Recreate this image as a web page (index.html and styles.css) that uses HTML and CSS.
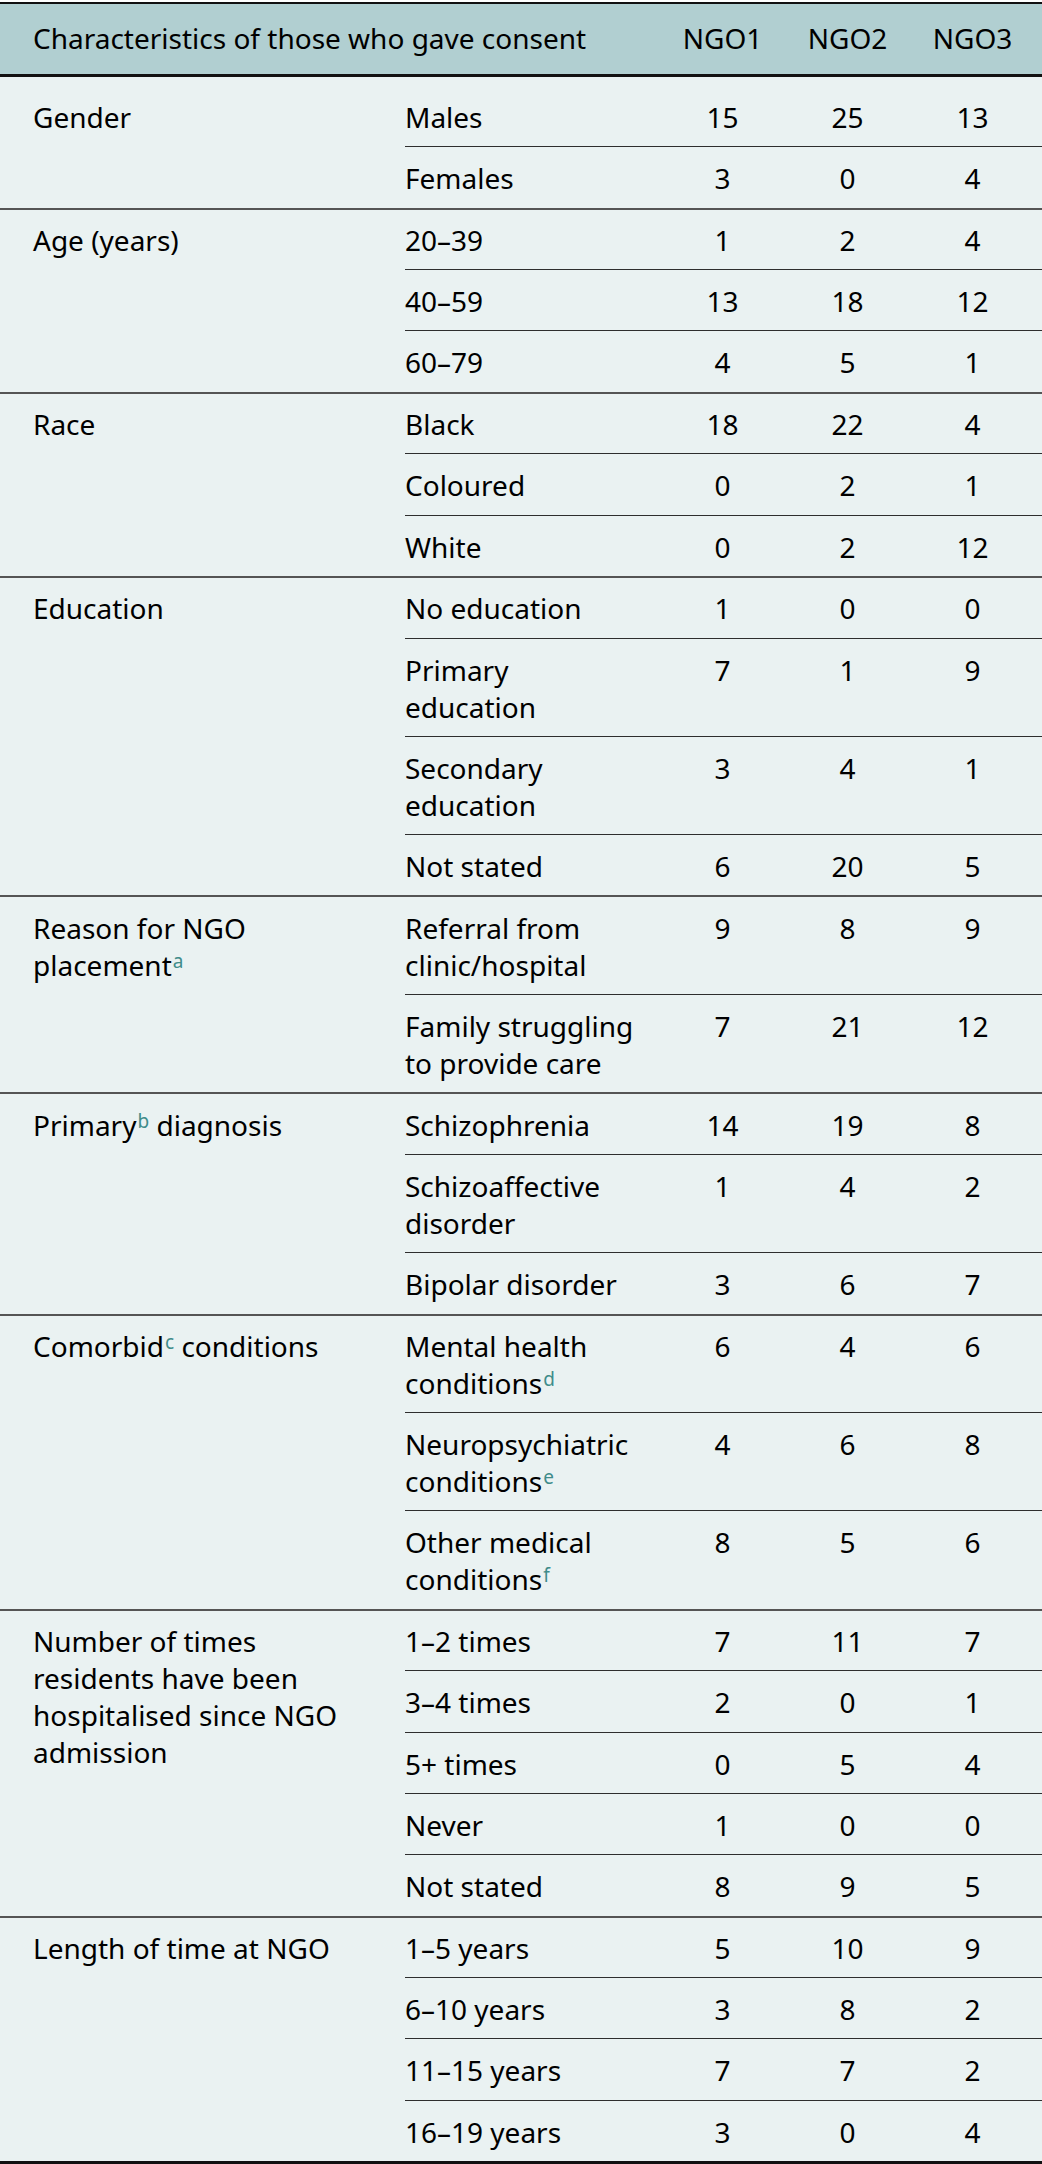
FILE: index.html
```html
<!DOCTYPE html>
<html lang="en">
<head>
<meta charset="utf-8">
<title>Characteristics of those who gave consent</title>
<link rel="stylesheet" href="styles.css">
</head>
<body>
<table class="chars">
  <colgroup>
    <col class="c-cat">
    <col class="c-sub">
    <col class="c-num">
    <col class="c-num">
    <col class="c-last">
  </colgroup>
  <thead>
    <tr>
      <th colspan="2" class="h-label">Characteristics of those who gave consent</th>
      <th class="num">NGO1</th>
      <th class="num">NGO2</th>
      <th class="num last">NGO3</th>
    </tr>
  </thead>
  <tbody>
    <tr class="group first">
      <td rowspan="2" class="cat">Gender</td>
      <td class="sub">Males</td><td class="num">15</td><td class="num">25</td><td class="num last">13</td>
    </tr>
    <tr><td class="sub">Females</td><td class="num">3</td><td class="num">0</td><td class="num last">4</td></tr>

    <tr class="group">
      <td rowspan="3" class="cat">Age (years)</td>
      <td class="sub">20–39</td><td class="num">1</td><td class="num">2</td><td class="num last">4</td>
    </tr>
    <tr><td class="sub">40–59</td><td class="num">13</td><td class="num">18</td><td class="num last">12</td></tr>
    <tr><td class="sub">60–79</td><td class="num">4</td><td class="num">5</td><td class="num last">1</td></tr>

    <tr class="group">
      <td rowspan="3" class="cat">Race</td>
      <td class="sub">Black</td><td class="num">18</td><td class="num">22</td><td class="num last">4</td>
    </tr>
    <tr><td class="sub">Coloured</td><td class="num">0</td><td class="num">2</td><td class="num last">1</td></tr>
    <tr><td class="sub">White</td><td class="num">0</td><td class="num">2</td><td class="num last">12</td></tr>

    <tr class="group">
      <td rowspan="4" class="cat">Education</td>
      <td class="sub">No education</td><td class="num">1</td><td class="num">0</td><td class="num last">0</td>
    </tr>
    <tr><td class="sub">Primary education</td><td class="num">7</td><td class="num">1</td><td class="num last">9</td></tr>
    <tr><td class="sub">Secondary education</td><td class="num">3</td><td class="num">4</td><td class="num last">1</td></tr>
    <tr><td class="sub">Not stated</td><td class="num">6</td><td class="num">20</td><td class="num last">5</td></tr>

    <tr class="group">
      <td rowspan="2" class="cat">Reason for NGO placement<sup class="fn">a</sup></td>
      <td class="sub">Referral from clinic/hospital</td><td class="num">9</td><td class="num">8</td><td class="num last">9</td>
    </tr>
    <tr><td class="sub">Family struggling to provide care</td><td class="num">7</td><td class="num">21</td><td class="num last">12</td></tr>

    <tr class="group">
      <td rowspan="3" class="cat">Primary<sup class="fn">b</sup> diagnosis</td>
      <td class="sub">Schizophrenia</td><td class="num">14</td><td class="num">19</td><td class="num last">8</td>
    </tr>
    <tr><td class="sub">Schizoaffective disorder</td><td class="num">1</td><td class="num">4</td><td class="num last">2</td></tr>
    <tr><td class="sub">Bipolar disorder</td><td class="num">3</td><td class="num">6</td><td class="num last">7</td></tr>

    <tr class="group">
      <td rowspan="3" class="cat">Comorbid<sup class="fn">c</sup> conditions</td>
      <td class="sub">Mental health conditions<sup class="fn">d</sup></td><td class="num">6</td><td class="num">4</td><td class="num last">6</td>
    </tr>
    <tr><td class="sub">Neuropsychiatric conditions<sup class="fn">e</sup></td><td class="num">4</td><td class="num">6</td><td class="num last">8</td></tr>
    <tr><td class="sub">Other medical conditions<sup class="fn">f</sup></td><td class="num">8</td><td class="num">5</td><td class="num last">6</td></tr>

    <tr class="group">
      <td rowspan="5" class="cat">Number of times residents have been hospitalised since NGO admission</td>
      <td class="sub">1–2 times</td><td class="num">7</td><td class="num">11</td><td class="num last">7</td>
    </tr>
    <tr><td class="sub">3–4 times</td><td class="num">2</td><td class="num">0</td><td class="num last">1</td></tr>
    <tr><td class="sub">5+ times</td><td class="num">0</td><td class="num">5</td><td class="num last">4</td></tr>
    <tr><td class="sub">Never</td><td class="num">1</td><td class="num">0</td><td class="num last">0</td></tr>
    <tr><td class="sub">Not stated</td><td class="num">8</td><td class="num">9</td><td class="num last">5</td></tr>

    <tr class="group">
      <td rowspan="4" class="cat">Length of time at NGO</td>
      <td class="sub">1–5 years</td><td class="num">5</td><td class="num">10</td><td class="num last">9</td>
    </tr>
    <tr><td class="sub">6–10 years</td><td class="num">3</td><td class="num">8</td><td class="num last">2</td></tr>
    <tr><td class="sub">11–15 years</td><td class="num">7</td><td class="num">7</td><td class="num last">2</td></tr>
    <tr><td class="sub">16–19 years</td><td class="num">3</td><td class="num">0</td><td class="num last">4</td></tr>
  </tbody>
</table>
</body>
</html>
```

FILE: styles.css
```css
html, body {
  margin: 0;
  padding: 0;
  background: #ffffff;
}

body {
  padding-top: 2px;
}

.chars {
  width: 1042px;
  table-layout: fixed;
  border-collapse: separate;
  border-spacing: 0;
  font-family: "Noto Sans", "Open Sans", sans-serif;
  font-size: 28px;
  line-height: 37px;
  color: #000000;
  background: #eaf2f2;
  border-top: 2px solid #111111;
  border-bottom: 3px solid #111111;
}

.c-cat { width: 405px; }
.c-sub { width: 255px; }
.c-num { width: 125px; }
.c-last { width: 132px; }

.chars th {
  font-weight: normal;
  background: #b1cfd1;
  padding: 16px 0 17px 0;
  border-bottom: 3px solid #111111;
}

.chars th.h-label {
  text-align: left;
  padding-left: 33px;
}

.chars td {
  padding: 13px 0 10.3px 0;
  vertical-align: top;
}

.chars td.cat {
  padding-left: 33px;
  padding-right: 67px;
}

.chars td.sub {
  padding-right: 21px;
}

.chars .num {
  text-align: center;
}

.chars .num.last {
  padding-right: 7px;
}

.chars tbody tr + tr td {
  border-top: 1px solid #2e2e2e;
}

.chars tbody tr.group td {
  border-top: 2px solid #555555;
  padding-top: 12.3px;
}

.chars tbody tr.first td {
  border-top: none;
  padding-top: 22px;
}

.fn {
  color: #3f8c8a;
  font-size: 19px;
  line-height: 0;
  vertical-align: 8px;
  margin-left: 1px;
}
```
